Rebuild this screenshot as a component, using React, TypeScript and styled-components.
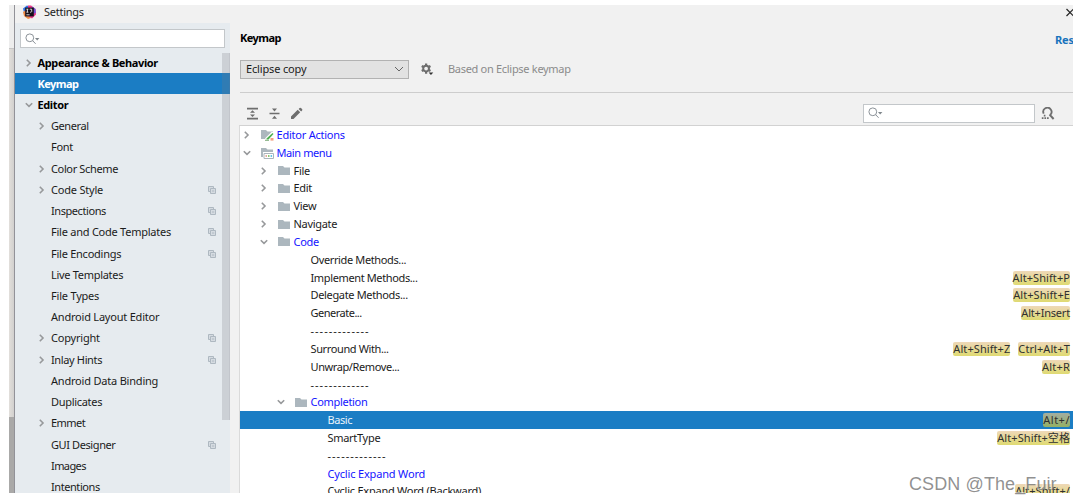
import React from "react";
import styled, { createGlobalStyle } from "styled-components";

const GlobalStyle = createGlobalStyle`
  body {
    margin: 0;
    background: #ffffff;
    overflow: hidden;
  }
  * {
    box-sizing: border-box;
  }
`;

const Page = styled.div`
  position: relative;
  display: flex;
  width: 1073px;
  height: 501px;
  padding: 5px 0 8px 9px;
  overflow: hidden;
  font-family: "Noto Sans", "Noto Sans CJK SC", sans-serif;
  font-size: 11px;
  line-height: 16px;
  color: #1b1b1b;
  white-space: nowrap;
`;

const Backdrop = styled.div`
  display: flex;
  flex-direction: column;
  flex: none;
  width: 6px;
  height: 488px;
  background: #aaa9a8;
  border-right: 1px solid #929298;
`;

const BackdropTop = styled.div`
  height: 44px;
  background: #ededed;
  border-bottom: 1px solid #c6c6c6;
`;

const BackdropMiddle = styled.div`
  height: 368px;
  background: linear-gradient(90deg, #e2dfdb, #d2d0ce);
`;

const Dialog = styled.div`
  display: flex;
  flex-direction: column;
  flex: 1;
  min-width: 0;
  height: 488px;
  overflow: hidden;
  background: #f1f1f1;
`;

const TitleBar = styled.div`
  display: flex;
  align-items: center;
  flex: none;
  height: 18px;
  padding: 0 0 4px 8px;
  color: #222222;

  span {
    flex: 1;
    margin-left: 8px;
    letter-spacing: -0.25px;
  }
`;

const Body = styled.div`
  display: flex;
  flex: 1;
  min-height: 0;
`;

const Sidebar = styled.div`
  display: flex;
  flex-direction: column;
  flex: none;
  width: 215px;
  padding-top: 6px;
  background: #e6ebef;
`;

const SearchField = styled.div<{ $width: number }>`
  display: flex;
  align-items: center;
  flex: none;
  width: ${(p) => p.$width}px;
  height: 19px;
  padding-left: 4px;
  background: #ffffff;
  border: 1px solid #c3c7ca;
`;

const SidebarSearch = styled.div`
  padding: 0 5px;
`;

const SidebarContent = styled.div`
  display: grid;
  grid-template-columns: 1fr 8px;
  flex: 1;
  min-height: 0;
  margin-top: 4px;
  overflow: hidden;
`;

const SidebarList = styled.div`
  grid-area: 1 / 1 / 2 / 3;
`;

const Scrollbar = styled.div`
  grid-area: 1 / 2;
  height: 367px;
  margin-top: 1px;
  background: rgba(120, 120, 130, 0.23);
  border-right: 1px solid rgba(120, 120, 130, 0.12);
  z-index: 1;
`;

const SidebarRow = styled.div<{ $level: number; $selected?: boolean }>`
  display: flex;
  align-items: center;
  height: 21.22px;
  padding: 0 14px 0 ${(p) => (p.$level ? 23 : 10)}px;
  color: ${(p) => (p.$selected ? "#ffffff" : p.$level ? "#1b1b1b" : "#000000")};
  font-weight: ${(p) => (p.$level ? 400 : 700)};
  background: ${(p) => (p.$selected ? "#1b7dc4" : "transparent")};
`;

const ArrowSlot = styled.div<{ $width: number; $inset?: number }>`
  display: flex;
  align-items: center;
  flex: none;
  width: ${(p) => p.$width}px;
  padding-left: ${(p) => p.$inset || 0}px;
`;

const Label = styled.span<{ $spacing?: number }>`
  flex: 1;
  letter-spacing: ${(p) => p.$spacing ?? -0.3}px;
`;

const Main = styled.div`
  display: flex;
  flex-direction: column;
  flex: 1;
  min-width: 0;
  padding-left: 10px;
`;

const Header = styled.div`
  display: flex;
  align-items: center;
  justify-content: space-between;
  height: 36px;
  padding-bottom: 6px;
  font-weight: 700;
  letter-spacing: -0.55px;
  color: #000000;
`;

const ResetLink = styled.span`
  width: 18px;
  margin-top: 4px;
  overflow: hidden;
  letter-spacing: -0.2px;
  color: #1873bd;
`;

const SchemeRow = styled.div`
  display: flex;
  align-items: center;
  box-sizing: content-box;
  height: 20px;
  padding-bottom: 13px;
  border-bottom: 1px solid #cdcdcd;
`;

const Select = styled.div`
  display: flex;
  align-items: center;
  justify-content: space-between;
  width: 169px;
  height: 19px;
  padding: 0 4px 0 5px;
  letter-spacing: -0.15px;
  background: #e2e2e2;
  border: 1px solid #b2b2b2;
`;

const Hint = styled.span`
  margin-left: 14px;
  letter-spacing: -0.3px;
  color: #8b8b8b;
`;

const Toolbar = styled.div`
  display: flex;
  align-items: center;
  flex: none;
  height: 32px;
  padding: 8px 17px 0 6px;
`;

const ToolGroup = styled.div`
  display: flex;
  align-items: center;
  flex: 1;
  gap: 9px;
`;

const ActionTree = styled.div`
  flex: 1;
  min-height: 0;
  margin-left: -1px;
  overflow: hidden;
  background: #ffffff;
  border-top: 1px solid #d2d2d2;
  border-left: 1px solid #dadada;
`;

const ActionRow = styled.div<{ $indent: number; $selected?: boolean; $changed?: boolean }>`
  display: flex;
  align-items: center;
  height: 17.83px;
  padding: 0 3px 0 ${(p) => p.$indent}px;
  color: ${(p) => (p.$selected ? "#e9f3fb" : p.$changed ? "#1414ff" : "#1b1b1b")};
  background: ${(p) => (p.$selected ? "#1b7dc4" : "transparent")};
`;

const Shortcuts = styled.div`
  display: flex;
  gap: 8px;
`;

const Shortcut = styled.span<{ $selected?: boolean; $spacing?: number }>`
  height: 14px;
  line-height: 14px;
  border-radius: 2px;
  letter-spacing: ${(p) => p.$spacing ?? 0.08}px;
  color: #303030;
  background: ${(p) =>
    p.$selected
      ? "linear-gradient(#a3ada0, #94b064)"
      : "linear-gradient(#eed8b8, #dfda72)"};
`;

const Watermark = styled.div`
  position: absolute;
  left: 909px;
  top: 474px;
  font-family: "Liberation Sans", sans-serif;
  font-size: 18px;
  line-height: 20px;
  letter-spacing: 0.1px;
  color: rgba(125, 125, 125, 0.85);
  text-shadow: -1px -1px 0 rgba(255, 255, 255, 0.6);
`;

function Arrow({ open }: { open?: boolean }) {
  return (
    <svg width="8" height="8" viewBox="0 0 8 8" fill="none" stroke="#97999b" strokeWidth="1.6">
      <path d={open ? "M0.8 2.2 4 5.4 7.2 2.2" : "M1.8 0.8 5 4 1.8 7.2"} />
    </svg>
  );
}

function SearchIcon() {
  return (
    <svg width="15" height="12" viewBox="0 0 15 12" fill="none" stroke="#8b9298">
      <circle cx="4.8" cy="4.8" r="3.9" />
      <path d="M7.6 7.6 10.6 10.8" />
      <path d="M10 5h4.4l-2.2 2.4z" fill="#7f868b" stroke="none" />
    </svg>
  );
}

function AppIcon() {
  return (
    <svg width="13" height="14" viewBox="0 0 13 14">
      <path d="M0 3.5 4 0.5 7 2v9L2 11.5z" fill="#2e74e8" />
      <path d="M0 7 3 5l5 8-3 1-4-3z" fill="#f08b45" />
      <path d="M5 0.5h3L12.5 4 13 9.5 9 13.5 5 11z" fill="#e9368b" />
      <path d="M9 1.5 12.5 4l.3 4-3.8 1z" fill="#6d52d9" />
      <rect x="2.2" y="2.6" width="8.6" height="8.8" fill="#150f1b" />
      <path d="M3.4 4.2h2M4.4 4.2v3M3.4 7.2h2M6.7 4.2h2v2.4q0 .7-1.6.6M3.4 9.8h3.2" fill="none" stroke="#fff" strokeWidth=".8" />
    </svg>
  );
}

function CopyIcon() {
  return (
    <svg width="8" height="8" viewBox="0 0 8 8" fill="#d5dbe1" stroke="#aeb8c1">
      <path d="M.5 .5h5v5h-5z" />
      <path d="M2.5 2.5h5v5h-5zM4 5h2.2" />
    </svg>
  );
}

function FolderIcon({ kind }: { kind?: string }) {
  return (
    <svg width="13" height="13" viewBox="0 0 13 13">
      <path d="M0 2h5l1.5 1.6H12V11H0z" fill="#acb7be" />
      {kind === "editor" && (
        <g>
          <path d="M4 13V10.5L10.5 4H13v9z" fill="#fff" />
          <path d="M5.5 10.5 11.5 5l1 1-5 5.5h-2z" fill="#4caf50" />
          <path d="M4 12.3h4" stroke="#7cab78" />
          <path d="M9.5 10h3v2.6h-3z" fill="#f2a183" />
        </g>
      )}
      {kind === "menu" && (
        <g>
          <path d="M2 6h11v7H2z" fill="#fff" />
          <path d="M3 7.5h9.5v5H3z" fill="#fff" stroke="#aab5bc" />
          <path d="M4.5 10h1.5" stroke="#d98f79" strokeWidth="1.6" />
          <path d="M7 10h1.5" stroke="#62b543" strokeWidth="1.6" />
          <path d="M9.6 10h1.5" stroke="#40b6e0" strokeWidth="1.6" />
        </g>
      )}
    </svg>
  );
}

function GearIcon() {
  return (
    <svg width="14" height="14" viewBox="0 0 14 14">
      <g stroke="#6e6e6e" strokeWidth="2.4">
        <path d="M5.5 1v11M.8 3.8l9.4 5.4M.8 9.2l9.4-5.4" />
      </g>
      <circle cx="5.5" cy="6.5" r="4.1" fill="#6e6e6e" />
      <circle cx="5.5" cy="6.5" r="2" fill="#f1f1f1" />
      <path d="M8.2 10.8h5L10.7 13.4z" fill="#333" />
    </svg>
  );
}

function ExpandIcon() {
  return (
    <svg width="13" height="13" viewBox="0 0 13 13" fill="#6e6e6e">
      <path d="M1 .8h11v1.6H1zM1 10.8h11v1.6H1zM6.5 3.3 9 5.8H4zM6.5 9.9 4 7.4h5z" />
    </svg>
  );
}

function CollapseIcon() {
  return (
    <svg width="13" height="13" viewBox="0 0 13 13" fill="#6e6e6e">
      <path d="M1.5 5.8h10v1.5h-10zM6.5 4.4 4 1.4h5zM6.5 8.8 9 11.8H4z" />
    </svg>
  );
}

function PencilIcon() {
  return (
    <svg width="13" height="13" viewBox="0 0 13 13" fill="#6e6e6e">
      <path d="M1 9.5 7.7 2.8l2.5 2.5L3.5 12H1zM8.6 1.9l1-1q.7-.5 1.3 0l1.2 1.2q.5.6 0 1.3l-1 1z" />
    </svg>
  );
}

function FindShortcutIcon() {
  return (
    <svg width="14" height="13" viewBox="0 0 14 13" fill="none" stroke="#6e6e6e" strokeWidth="1.8">
      <path d="M2.7 6.6A4.1 4.1 0 1 1 9 8" />
      <path d="M8.6 7.6 12.6 12" strokeWidth="2" />
      <path d="M.8 11.2h1.7M3.4 11.2h1.7M6 11.2h1.7M2.8 8.6h1.6" strokeWidth="1.8" />
    </svg>
  );
}

interface SettingItem {
  label: string;
  level: number;
  arrow?: string;
  copy?: boolean;
  spacing?: number;
}

const settings: SettingItem[] = [
  { label: "Appearance & Behavior", level: 0, arrow: "closed", spacing: -0.38 },
  { label: "Keymap", level: 0, spacing: -0.55 },
  { label: "Editor", level: 0, arrow: "open", spacing: -0.38 },
  { label: "General", level: 1, arrow: "closed", spacing: -0.43 },
  { label: "Font", level: 1 },
  { label: "Color Scheme", level: 1, arrow: "closed", spacing: -0.36 },
  { label: "Code Style", level: 1, arrow: "closed", copy: true, spacing: -0.2 },
  { label: "Inspections", level: 1, copy: true, spacing: -0.43 },
  { label: "File and Code Templates", level: 1, copy: true, spacing: -0.24 },
  { label: "File Encodings", level: 1, copy: true, spacing: -0.25 },
  { label: "Live Templates", level: 1 },
  { label: "File Types", level: 1, spacing: -0.2 },
  { label: "Android Layout Editor", level: 1, spacing: -0.21 },
  { label: "Copyright", level: 1, arrow: "closed", copy: true, spacing: -0.2 },
  { label: "Inlay Hints", level: 1, arrow: "closed", copy: true, spacing: -0.36 },
  { label: "Android Data Binding", level: 1, spacing: -0.2 },
  { label: "Duplicates", level: 1 },
  { label: "Emmet", level: 1, arrow: "closed", spacing: -0.55 },
  { label: "GUI Designer", level: 1, copy: true, spacing: -0.4 },
  { label: "Images", level: 1, spacing: -0.6 },
  { label: "Intentions", level: 1, spacing: -0.43 },
];

interface ActionItem {
  label: string;
  level: number;
  arrow?: string;
  icon?: string;
  changed?: boolean;
  keys?: string[];
  spacing?: number;
}

const separator = "-------------";

const actions: ActionItem[] = [
  { label: "Editor Actions", level: 0, arrow: "closed", icon: "editor", changed: true, spacing: -0.23 },
  { label: "Main menu", level: 0, arrow: "open", icon: "menu", changed: true, spacing: -0.4 },
  { label: "File", level: 1, arrow: "closed", icon: "folder" },
  { label: "Edit", level: 1, arrow: "closed", icon: "folder" },
  { label: "View", level: 1, arrow: "closed", icon: "folder" },
  { label: "Navigate", level: 1, arrow: "closed", icon: "folder" },
  { label: "Code", level: 1, arrow: "open", icon: "folder", changed: true },
  { label: "Override Methods...", level: 2, spacing: -0.37 },
  { label: "Implement Methods...", level: 2, keys: ["Alt+Shift+P"], spacing: -0.37 },
  { label: "Delegate Methods...", level: 2, keys: ["Alt+Shift+E"], spacing: -0.34 },
  { label: "Generate...", level: 2, keys: ["Alt+Insert"], spacing: -0.5 },
  { label: separator, level: 2, spacing: 1 },
  { label: "Surround With...", level: 2, keys: ["Alt+Shift+Z", "Ctrl+Alt+T"], spacing: -0.38 },
  { label: "Unwrap/Remove...", level: 2, keys: ["Alt+R"], spacing: -0.4 },
  { label: separator, level: 2, spacing: 1 },
  { label: "Completion", level: 2, arrow: "open", icon: "folder", changed: true },
  { label: "Basic", level: 3, keys: ["Alt+/"], spacing: -0.45 },
  { label: "SmartType", level: 3, keys: ["Alt+Shift+空格"] },
  { label: separator, level: 3, spacing: 1 },
  { label: "Cyclic Expand Word", level: 3, changed: true, spacing: -0.17 },
  { label: "Cyclic Expand Word (Backward)", level: 3, keys: ["Alt+Shift+/"], spacing: -0.24 },
];

const keySpacing: Record<string, number> = {
  "Alt+Insert": -0.2,
  "Alt+R": 0.2,
  "Alt+/": 0.5,
};

function App() {
  return (
    <Page>
      <GlobalStyle />
      <Backdrop>
        <BackdropTop />
        <BackdropMiddle />
      </Backdrop>
      <Dialog>
        <TitleBar>
          <AppIcon />
          <span>Settings</span>
          <svg width="7" height="9" viewBox="0 0 7 9" stroke="#222" strokeWidth="1.2" fill="none">
            <path d="M.5 1 7.5 8M7.5 1 .5 8" />
          </svg>
        </TitleBar>
        <Body>
          <Sidebar>
            <SidebarSearch>
              <SearchField $width={205}>
                <SearchIcon />
              </SearchField>
            </SidebarSearch>
            <SidebarContent>
              <SidebarList>
                {settings.map((item) => (
                  <SidebarRow
                    key={item.label}
                    $level={item.level}
                    $selected={item.label === "Keymap"}
                  >
                    <ArrowSlot $width={item.level ? 13 : 12.5}>
                      {item.arrow && <Arrow open={item.arrow === "open"} />}
                    </ArrowSlot>
                    <Label $spacing={item.spacing}>{item.label}</Label>
                    {item.copy && <CopyIcon />}
                  </SidebarRow>
                ))}
              </SidebarList>
              <Scrollbar />
            </SidebarContent>
          </Sidebar>
          <Main>
            <Header>
              <span>Keymap</span>
              <ResetLink>Reset</ResetLink>
            </Header>
            <SchemeRow>
              <Select>
                Eclipse copy
                <svg width="10" height="6" viewBox="0 0 10 6" fill="none" stroke="#666">
                  <path d="M1 1 5 5 9 1" />
                </svg>
              </Select>
              <ArrowSlot $width={25} $inset={12}>
                <GearIcon />
              </ArrowSlot>
              <Hint>Based on Eclipse keymap</Hint>
            </SchemeRow>
            <Toolbar>
              <ToolGroup>
                <ExpandIcon />
                <CollapseIcon />
                <PencilIcon />
              </ToolGroup>
              <SearchField $width={172}>
                <SearchIcon />
              </SearchField>
              <ArrowSlot $width={21} $inset={6}>
                <FindShortcutIcon />
              </ArrowSlot>
            </Toolbar>
            <ActionTree>
              {actions.map((item, i) => {
                const selected = item.label === "Basic";
                return (
                  <ActionRow
                    key={i}
                    $indent={(item.icon ? 2.5 : 36.5) + item.level * 17}
                    $selected={selected}
                    $changed={item.changed}
                  >
                    {item.icon && (
                      <>
                        <ArrowSlot $width={18}>
                          <Arrow open={item.arrow === "open"} />
                        </ArrowSlot>
                        <ArrowSlot $width={16}>
                          <FolderIcon kind={item.icon} />
                        </ArrowSlot>
                      </>
                    )}
                    <Label $spacing={item.spacing}>{item.label}</Label>
                    {item.keys && (
                      <Shortcuts>
                        {item.keys.map((key) => (
                          <Shortcut key={key} $selected={selected} $spacing={keySpacing[key]}>
                            {key}
                          </Shortcut>
                        ))}
                      </Shortcuts>
                    )}
                  </ActionRow>
                );
              })}
            </ActionTree>
          </Main>
        </Body>
      </Dialog>
      <Watermark>CSDN @The_Fuir</Watermark>
    </Page>
  );
}

export default App;
